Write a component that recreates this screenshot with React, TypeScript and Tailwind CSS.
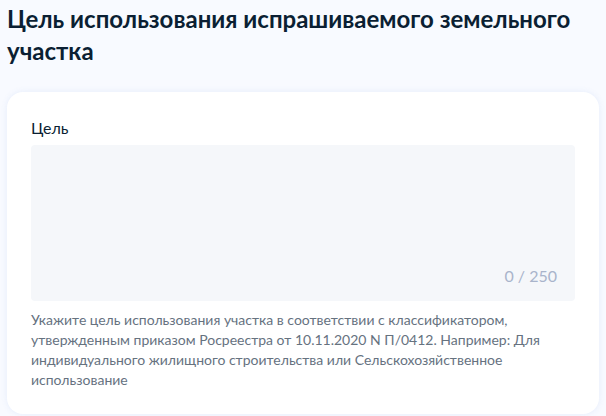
import React, { useState } from 'react';

export default function App() {
  const [value, setValue] = useState('');

  return (
    <div className="min-h-[416px] w-[606px] bg-[#f8faff] px-[7px] pt-[3px] font-['Lato','Noto_Sans',sans-serif] text-[#0b1f33]">
      <h1 className="text-[24px] font-bold leading-8 text-[#0b1f33]">
        Цель использования испрашиваемого земельного участка
      </h1>

      <div className="mt-[25px] w-[592px] rounded-2xl bg-white p-6 shadow-[0_0_6px_rgba(102,140,220,0.12)]">
        <label className="mb-[5px] block text-base leading-6 text-[#0b1f33]">Цель</label>
        <div className="relative h-[156px] rounded bg-[#f5f7fa]">
          <textarea
            value={value}
            maxLength={250}
            onChange={e => setValue(e.target.value)}
            className="h-full w-full resize-none bg-transparent p-4 text-base outline-none"
          />
          <span className="absolute bottom-[13px] right-[18px] text-base leading-6 text-[#a9b4cb]">
            {value.length} / 250
          </span>
        </div>
        <p className="mt-[9px] text-sm leading-5 text-[#66727f]">
          Укажите цель использования участка в соответствии с классификатором, утвержденным приказом
          Росреестра от 10.11.2020 N П/0412. Например: Для индивидуального жилищного строительства
          или Сельскохозяйственное использование
        </p>
      </div>
    </div>
  );
}
